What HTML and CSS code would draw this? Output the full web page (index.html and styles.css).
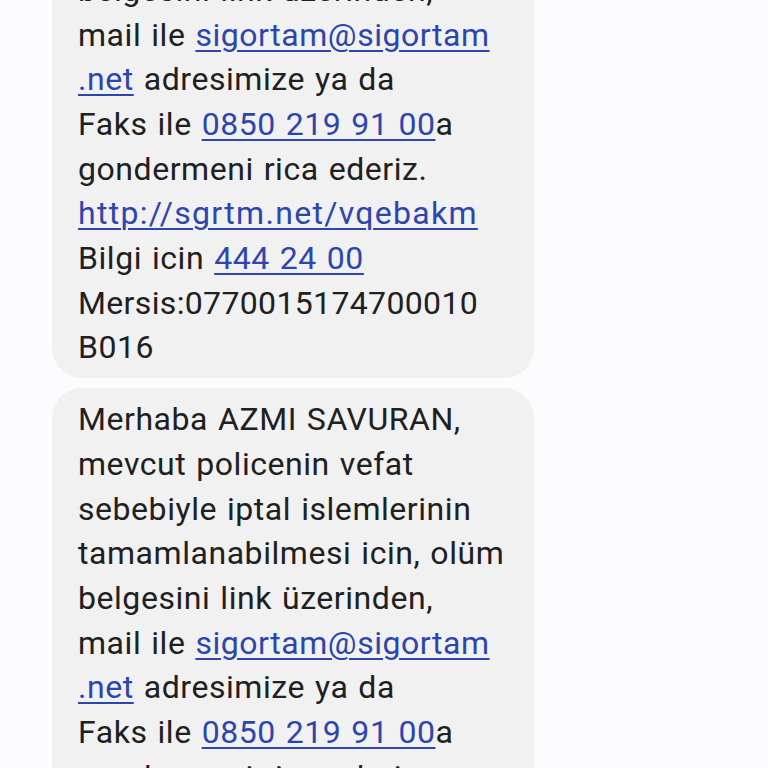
FILE: index.html
```html
<!DOCTYPE html>
<html lang="tr">
<head>
<meta charset="utf-8">
<link rel="stylesheet" href="styles.css">
</head>
<body>
<main class="thread">
  <div class="bubble first">
    <p class="msg">Merhaba AZMI SAVURAN,<br>mevcut policenin vefat<br>sebebiyle iptal islemlerinin<br>tamamlanabilmesi icin, olüm<br>belgesini link üzerinden,<br>mail ile <a href="#">sigortam@sigortam<br>.net</a> adresimize ya da<br>Faks ile <a href="#">0850 219 91 00</a>a<br>gondermeni rica ederiz.<br><a href="#" class="url">http://sgrtm.net/vqebakm</a><br>Bilgi icin <a href="#">444 24 00</a><br><span class="num">Mersis:0770015174700010</span><br>B016</p>
  </div>
  <div class="bubble">
    <p class="msg">Merhaba AZMI SAVURAN,<br>mevcut policenin vefat<br>sebebiyle iptal islemlerinin<br>tamamlanabilmesi icin, olüm<br>belgesini link üzerinden,<br>mail ile <a href="#">sigortam@sigortam<br>.net</a> adresimize ya da<br>Faks ile <a href="#">0850 219 91 00</a>a<br>gondermeni rica ederiz.<br><a href="#" class="url">http://sgrtm.net/vqebakm</a><br>Bilgi icin <a href="#">444 24 00</a><br><span class="num">Mersis:0770015174700010</span><br>B016</p>
  </div>
</main>
</body>
</html>
```
FILE: styles.css
```css
html, body {
  margin: 0;
  padding: 0;
  background: #fcfcfe;
}
body {
  font-family: Roboto, "Noto Sans", sans-serif;
  color: #202020;
  overflow: hidden;
  height: 768px;
}
.thread {
  display: flex;
  flex-direction: column;
  align-items: flex-start;
  gap: 10px;
  padding-left: 52px;
  margin-top: -220px;
}
.bubble {
  width: 482px;
  box-sizing: border-box;
  background: #f1f1f2;
  border-radius: 30px;
  padding: 9px 20px 8px 26px;
}
.msg {
  margin: 0;
  font-size: 32px;
  line-height: 44.7px;
  letter-spacing: 0.55px;
  word-spacing: 1.5px;
  white-space: nowrap;
}
.msg a {
  color: #2c46ad;
  text-decoration: underline;
  text-decoration-thickness: 2px;
  text-underline-offset: 4px;
}
.msg .url {
  letter-spacing: 1.3px;
}
.msg .num {
  letter-spacing: 0.35px;
}
```
